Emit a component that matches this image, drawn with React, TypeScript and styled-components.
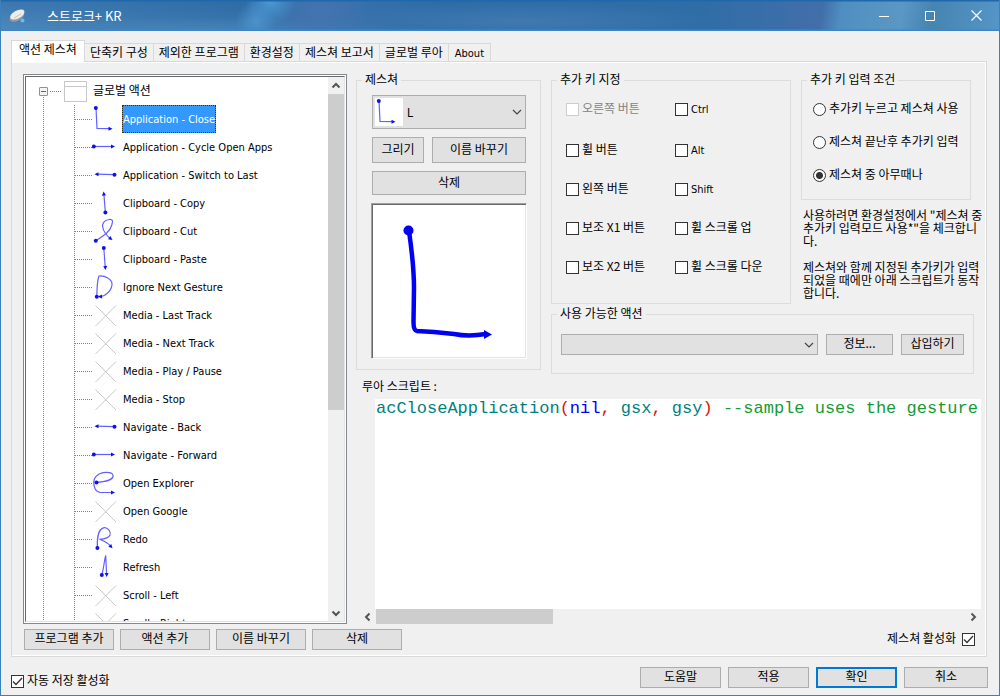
import React, { useState } from "react";
import styled, { createGlobalStyle, css } from "styled-components";

const korean = `"Noto Sans CJK KR", sans-serif`;
const latin = `"DejaVu Sans Condensed", "DejaVu Sans", "Noto Sans CJK KR", sans-serif`;

const GlobalStyle = createGlobalStyle`
  * { box-sizing: border-box; }
  body { margin: 0; overflow: hidden; background: #f0f0f0; }
  button, select, input { font: inherit; color: inherit; }
`;

const Window = styled.div`
  display: flex;
  flex-direction: column;
  height: 100vh;
  min-height: 600px;
  border: 1px solid #3b82bd;
  border-top: 0;
  background: #f0f0f0;
  color: #000;
  font: 12px/14px ${korean};
`;

const TitleBar = styled.header`
  flex: none;
  display: flex;
  align-items: center;
  height: 31px;
  padding-left: 6px;
  color: #fff;
  background:
    linear-gradient(#1e68ab 0 1px, transparent 2px 29px, #3f86c6 30px),
    radial-gradient(ellipse 26px 26px at 27% 0, #4c9ad6, transparent),
    radial-gradient(ellipse 20px 20px at 25.5% 70%, #4c92cc, transparent),
    radial-gradient(ellipse 50px 34px at 32% 40%, #4374b0, transparent),
    radial-gradient(ellipse 200px 14px at 20% 100%, #4683b8, transparent),
    radial-gradient(ellipse 200px 20px at 52% 70%, #4179b0, transparent),
    linear-gradient(8deg, #4e89bc 0, #3d79b0 16%, transparent 36%),
    linear-gradient(100deg, transparent 82%, #4f8fc0 84%, #5b97c4 90%, #4684b2 93%, #5596c6 100%),
    linear-gradient(90deg, #2f6ea8, #2f6ca6 25%, #3a72ac 32%, #2d6ca6 45%, #2f6da7 70%, #416fa9 82%);
`;

const Title = styled.h1`
  flex: 1;
  margin: 0 0 0 20px;
  font-size: 13px;
  font-weight: 400;
  line-height: 15px;
`;

const CaptionButton = styled.button`
  display: grid;
  place-items: center;
  width: 46px;
  height: 30px;
  padding: 0;
  border: 0;
  background: none;
`;

const Tabs = styled.nav`
  flex: none;
  display: flex;
  align-items: flex-end;
  height: 31px;
  margin: 0 13px -1px 10px;
  z-index: 1;
`;

const Tab = styled.button<{ $active?: boolean; $latin?: boolean }>`
  height: 19px;
  margin: 0;
  padding: 0 5px 1px;
  border: 1px solid #d9d9d9;
  border-left: 0;
  background: #f0f0f0;
  white-space: nowrap;
  ${(p) => p.$latin && css`padding: 2px 6px 0; font-family: ${latin}; font-size: 11px;`}
  ${(p) =>
    p.$active &&
    css`
      height: 22px;
      padding: 0 7px 5px;
      border-left: 1px solid #d9d9d9;
      border-bottom: 0;
      background: #fff;
    `}
`;

const Panel = styled.main`
  flex: 1;
  min-height: 0;
  display: flex;
  flex-direction: column;
  margin: 0 12px 0 10px;
  border: 1px solid #d9d9d9;
  box-shadow: inset -1px -1px #fff, inset 0 1px #fff;
  padding: 12px 1px 6px 0;
`;

const Workspace = styled.div`
  flex: 1;
  min-height: 0;
  display: flex;
  gap: 9px;
  padding-left: 11px;
`;

const TreeFrame = styled.div`
  flex: none;
  width: 324px;
  border: 1px solid #828790;
  padding: 1px;
  background: #fff;
`;

const TreeInset = styled.div`
  display: flex;
  height: 100%;
  border: 1px solid #696969;
  border-right-color: #e3e3e3;
  border-bottom-color: #e3e3e3;
`;

const TreeList = styled.ul`
  flex: 1;
  min-width: 0;
  margin: 0;
  padding: 0;
  overflow: hidden;
  list-style: none;
  font-family: ${latin};
  font-size: 11px;
`;

const vDots = `repeating-linear-gradient(#808080 0 1px, transparent 1px 2px)`;
const hDots = `repeating-linear-gradient(90deg, #808080 0 1px, transparent 1px 2px)`;

const TreeRow = styled.li<{ $root?: boolean }>`
  display: flex;
  align-items: center;
  height: 28px;
  ${(p) => p.$root && css`background: ${vDots} 17px 100% / 1px 8px no-repeat;`}
`;

const Guide = styled.span<{ $width: number }>`
  flex: none;
  width: ${(p) => p.$width}px;
  height: 28px;
  background: ${vDots} right / 1px 100% no-repeat;
`;

const Branch = styled.span<{ $width: number }>`
  flex: none;
  width: ${(p) => p.$width}px;
  height: 1px;
  background: ${hDots};
`;

const Toggle = styled.button`
  flex: none;
  width: 9px;
  height: 9px;
  margin: 0 2px 0 13px;
  padding: 0;
  border: 1px solid #919191;
  border-radius: 1px;
  background: linear-gradient(#4b63a7, #4b63a7) center / 5px 1px no-repeat, #f4f4f4;
`;

const FolderIcon = styled.span`
  flex: none;
  width: 23px;
  height: 21px;
  margin: 0 6px 0 3px;
  border: 1px solid #c8c8c8;
  background: linear-gradient(#c8c8c8, #c8c8c8) 0 4px / 100% 1px no-repeat;
`;

const RootLabel = styled.span`
  font: 12px/14px ${korean};
  padding-bottom: 3px;
`;

const Item = styled.button<{ $selected: boolean }>`
  height: 28px;
  margin-left: 2px;
  padding: 2px 0 0;
  border: 1px dotted ${(p) => (p.$selected ? "#3a2a10" : "transparent")};
  background: ${(p) => (p.$selected ? "#3399ff" : "none")};
  color: ${(p) => (p.$selected ? "#fff" : "#000")};
  white-space: nowrap;
`;

const VScroll = styled.div`
  flex: none;
  display: flex;
  flex-direction: column;
  align-items: center;
  width: 16px;
  background: #f0f0f0;
`;

const VThumb = styled.div`
  width: 16px;
  height: 58%;
  margin-right: 1px;
  background: #cdcdcd;
`;

const ArrowBox = styled.button`
  flex: none;
  display: grid;
  place-items: center;
  width: 17px;
  height: 17px;
  padding: 0;
  border: 0;
  background: none;
`;

const Spacer = styled.div`
  flex: 1;
`;

const Details = styled.div`
  flex: 1;
  min-width: 0;
  display: flex;
  flex-direction: column;
`;

const Groups = styled.div`
  flex: none;
  display: flex;
  gap: 10px;
  align-items: flex-start;
  margin-top: -1px;
`;

const GroupColumn = styled.div`
  flex: 1;
  min-width: 0;
`;

const GroupRow = styled.div`
  display: flex;
  gap: 10px;
  align-items: flex-start;
`;

const GroupBox = styled.fieldset`
  min-width: 0;
  margin: 0;
  padding: 0;
  border: 1px solid #dcdcdc;
`;

const Legend = styled.legend`
  height: 15px;
  margin-left: 5px;
  padding: 0 3px;
  line-height: 11px;
`;

const GestureBox = styled(GroupBox)`
  flex: none;
  width: 185px;
`;

const GestureBody = styled.div`
  display: grid;
  grid-template-columns: 52px 1fr;
  gap: 8px;
  padding: 7px 14px 10px 15px;
`;

const SelectWrap = styled.div<{ $wide?: boolean }>`
  position: relative;
  display: flex;
  flex: 1;
  min-width: 0;
  ${(p) => p.$wide && css`grid-column: 1 / -1;`}
`;

const Select = styled.select<{ $tall?: boolean }>`
  appearance: none;
  width: 100%;
  height: ${(p) => (p.$tall ? 34 : 21)}px;
  padding: 2px 24px 0 ${(p) => (p.$tall ? 34 : 6)}px;
  border: 1px solid #adadad;
  border-radius: 0;
  background: #e1e1e1;
  font-family: ${latin};
`;

const SelectChevron = styled.svg`
  position: absolute;
  right: 4px;
  top: calc(50% - 3px);
  pointer-events: none;
`;

const SelectThumb = styled.svg`
  position: absolute;
  left: 3px;
  top: 3px;
  background: #fff;
  pointer-events: none;
`;

const Button = styled.button<{ $width?: number; $height?: number; $wide?: boolean; $primary?: boolean }>`
  flex: none;
  width: ${(p) => (p.$width ? `${p.$width}px` : "auto")};
  height: ${(p) => p.$height ?? 21}px;
  padding: 0 0 3px;
  border: ${(p) => (p.$primary ? "2px solid #0078d7" : "1px solid #adadad")};
  border-radius: 0;
  background: #e1e1e1;
  line-height: 14px;
  white-space: nowrap;
  ${(p) => p.$wide && css`grid-column: 1 / -1;`}
`;

const Preview = styled.div`
  grid-column: 1 / -1;
  height: 156px;
  margin: 0 -1px;
  border: 1px solid #a0a0a0;
  border-right-color: #fff;
  border-bottom-color: #fff;
  background: #fff;
  box-shadow: inset 1px 1px #696969, inset -1px -1px #e3e3e3;
`;

const KeysBox = styled(GroupBox)`
  flex: 1 0 240px;
`;

const KeyGrid = styled.div`
  display: grid;
  grid-template-columns: 109px 1fr;
  grid-template-rows: 41px repeat(4, 39px);
  align-items: start;
  padding: 15px 0 3px 14px;
`;

const Choice = styled.label<{ $disabled?: boolean; $gap?: number }>`
  display: flex;
  align-items: center;
  gap: ${(p) => p.$gap ?? 3}px;
  height: 13px;
  color: ${(p) => (p.$disabled ? "#838383" : "#000")};
  white-space: nowrap;
`;

const ChoiceText = styled.span<{ $latin?: boolean }>`
  padding-bottom: 3px;
  ${(p) => p.$latin && css`padding-bottom: 0; font-family: ${latin}; font-size: 11px;`}
`;

const tick = `url("data:image/svg+xml,%3Csvg xmlns='http://www.w3.org/2000/svg' width='11' height='11'%3E%3Cpath d='M1 5.5L4 8.5L10 2' fill='none' stroke='%23333' stroke-width='1.3'/%3E%3C/svg%3E")`;

const CheckBox = styled.input.attrs({ type: "checkbox" })`
  appearance: none;
  flex: none;
  width: 13px;
  height: 13px;
  margin: 0;
  border: 1px solid #333;
  background: #fff;
  &:checked { background: ${tick} center no-repeat #fff; }
  &:disabled { border-color: #ccc; }
`;

const Radio = styled.input.attrs({ type: "radio" })`
  appearance: none;
  flex: none;
  width: 13px;
  height: 13px;
  margin: 0;
  border: 1px solid #333;
  border-radius: 50%;
  background: #fff;
  &:checked { background: radial-gradient(circle, #333 3px, #fff 4px); }
`;

const ConditionColumn = styled.div`
  flex: none;
  width: 184px;
`;

const ConditionBox = styled(GroupBox)`
  width: 170px;
`;

const RadioList = styled.div`
  display: grid;
  gap: 20px;
  padding: 15px 0 17px 11px;
`;

const Note = styled.p`
  margin: 8px 0 0 2px;
  line-height: 13px;
  & + & { margin-top: 13px; }
`;

const ActionBox = styled(GroupBox)`
  margin: 3px 11px 0 0;
`;

const ActionRow = styled.div`
  display: flex;
  gap: 8px;
  padding: 12px 9px 18px;
`;

const ScriptLabel = styled.div`
  flex: none;
  height: 25px;
  padding: 5px 0 0 6px;
`;

const Editor = styled.div`
  flex: 1;
  min-height: 0;
  display: flex;
  flex-direction: column;
  margin-right: 4px;
`;

const Code = styled.pre`
  flex: 1;
  min-height: 0;
  margin: 0 0 0 19px;
  padding-left: 1px;
  overflow: hidden;
  background: #fff;
  color: #008080;
  font: 17px/19px "Courier New", "Liberation Mono", monospace;
  outline: 0;
`;

const Token = styled.span<{ $kind: "punct" | "keyword" | "comment" }>`
  color: ${(p) => ({ punct: "#e01010", keyword: "#0000ff", comment: "#159a35" })[p.$kind]};
`;

const HScroll = styled.div`
  flex: none;
  display: flex;
  align-items: center;
  height: 15px;
  padding-left: 3px;
`;

const HThumb = styled.div`
  width: 177px;
  height: 15px;
  background: #cdcdcd;
`;

const Toolbar = styled.div`
  flex: none;
  display: flex;
  gap: 6px;
  align-items: center;
  margin-top: 5px;
  padding: 0 10px 0 12px;
`;

const Footer = styled.footer`
  flex: none;
  display: flex;
  gap: 7px;
  align-items: flex-end;
  height: 38px;
  padding: 0 11px 7px 10px;
`;

const BLUE = "#1010e8";

function Arrow({ x, y, angle }: { x: number; y: number; angle: number }) {
  return <path d="M0 0L-4 -2V2Z" fill={BLUE} transform={`translate(${x} ${y}) rotate(${angle})`} />;
}

const gestures: Record<string, { d: string; dot: [number, number]; tip: [number, number, number] }> = {
  l: { d: "M4 3L5 23.5L19 23.7", dot: [3.8, 3], tip: [20.5, 23.7, 0] },
  right: { d: "M2 13.5H21", dot: [1.8, 13.5], tip: [23, 13.5, 0] },
  left: { d: "M23 13.7L4 13.2", dot: [22.5, 13.7], tip: [2.5, 13.2, 180] },
  up: { d: "M13.4 23.5L11.8 4", dot: [13.4, 23.5], tip: [11.6, 2.5, -95] },
  cut: { d: "M3.8 23.8C11 19 18 15 19.8 8C21 4 21 2 17 2.5C12 3 10 7 10.7 10C11.5 15 15 19 19 22", dot: [3.8, 23.8], tip: [20.5, 23, 35] },
  down: { d: "M11.8 3L13.3 23", dot: [11.8, 3], tip: [13.5, 25, 86] },
  ignore: { d: "M4.8 23.5C5 14 5 8 7 3C13 2.5 20 6 20 11C20 17 14 23 8 23.8", dot: [4.8, 23.7], tip: [6, 23.8, 175] },
  explorer: { d: "M4.5 13.4C11 13 20 12 21 7.5C22 3 14 3 11 3.7C5 5 1.5 9 1.7 13.5C2 19 3 23 8 23.3L21 23.5", dot: [4.5, 13.4], tip: [23, 23.4, 0] },
  redo: { d: "M5.4 23C5 15 6 4 11.5 2.8C16 2 19 7 18 10C17 13 12 14 7.5 14.3C12 16 16 18 19 21.5", dot: [5.4, 23], tip: [20.5, 23.3, 48] },
  refresh: { d: "M9.8 22C12 15 12 8 13.7 2.5L14.6 21", dot: [9.8, 22], tip: [14.7, 24, 88] },
};

function GestureShape({ kind }: { kind: string }) {
  const g = gestures[kind];
  if (!g) return <path d="M3.5 4.5L24 25M24 4.5L3.5 25" stroke="#c8c8c8" fill="none" />;
  return (
    <>
      <path d={g.d} stroke="#6060ff" strokeWidth="1.2" fill="none" />
      <circle cx={g.dot[0]} cy={g.dot[1]} r="2" fill={BLUE} />
      <Arrow x={g.tip[0]} y={g.tip[1]} angle={g.tip[2]} />
    </>
  );
}

const actions: [string, string][] = [
  ["Application - Close", "l"],
  ["Application - Cycle Open Apps", "right"],
  ["Application - Switch to Last", "left"],
  ["Clipboard - Copy", "up"],
  ["Clipboard - Cut", "cut"],
  ["Clipboard - Paste", "down"],
  ["Ignore Next Gesture", "ignore"],
  ["Media - Last Track", "none"],
  ["Media - Next Track", "none"],
  ["Media - Play / Pause", "none"],
  ["Media - Stop", "none"],
  ["Navigate - Back", "left"],
  ["Navigate - Forward", "right"],
  ["Open Explorer", "explorer"],
  ["Open Google", "none"],
  ["Redo", "redo"],
  ["Refresh", "refresh"],
  ["Scroll - Left", "none"],
  ["Scroll - Right", "none"],
];

const keys: { text: string; latin?: boolean; disabled?: boolean }[] = [
  { text: "오른쪽 버튼", disabled: true },
  { text: "Ctrl", latin: true },
  { text: "휠 버튼" },
  { text: "Alt", latin: true },
  { text: "왼쪽 버튼" },
  { text: "Shift", latin: true },
  { text: "보조 X1 버튼" },
  { text: "휠 스크롤 업" },
  { text: "보조 X2 버튼" },
  { text: "휠 스크롤 다운" },
];

const conditions = ["추가키 누르고 제스쳐 사용", "제스쳐 끝난후 추가키 입력", "제스쳐 중 아무때나"];

const tabs = ["액션 제스쳐", "단축키 구성", "제외한 프로그램", "환경설정", "제스쳐 보고서", "글로벌 루아", "About"];

function ScrollArrow({ dir }: { dir: "up" | "down" | "left" | "right" }) {
  const angle = { up: 0, right: 90, down: 180, left: 270 }[dir];
  return (
    <ArrowBox type="button" aria-label={dir}>
      <svg width="10" height="10" viewBox="0 0 10 10">
        <path d="M1.5 6.5L5 3L8.5 6.5" fill="none" stroke="#555" strokeWidth="2" transform={`rotate(${angle} 5 5)`} />
      </svg>
    </ArrowBox>
  );
}

function Chevron() {
  return (
    <SelectChevron width="10" height="7" viewBox="0 0 10 7">
      <path d="M1 1L5 5L9 1" fill="none" stroke="#444" strokeWidth="1.2" />
    </SelectChevron>
  );
}

export default function App() {
  const [selected, setSelected] = useState(0);
  const [condition, setCondition] = useState(2);

  return (
    <Window>
      <GlobalStyle />
      <TitleBar>
        <svg width="20" height="20" viewBox="0 0 20 20">
          <ellipse cx="10" cy="10.5" rx="8" ry="4.2" transform="rotate(-28 10 10.5)" fill="#999" />
          <ellipse cx="10.3" cy="8.5" rx="7.8" ry="4" transform="rotate(-28 10.3 8.5)" fill="#ececec" />
          <path d="M7 12L14 8" stroke="#c4c4c4" />
          <circle cx="15.5" cy="14.5" r="2" fill="#5bc0f5" />
        </svg>
        <Title>스트로크+ KR</Title>
        <CaptionButton type="button" aria-label="최소화">
          <svg width="10" height="10"><path d="M0 5.5H10" stroke="#fff" /></svg>
        </CaptionButton>
        <CaptionButton type="button" aria-label="최대화">
          <svg width="10" height="10"><path d="M.5 .5H9.5V9.5H.5Z" stroke="#fff" fill="none" /></svg>
        </CaptionButton>
        <CaptionButton type="button" aria-label="닫기">
          <svg width="11" height="11"><path d="M.5 .5L10.5 10.5M10.5 .5L.5 10.5" stroke="#fff" strokeWidth="1.2" /></svg>
        </CaptionButton>
      </TitleBar>

      <Tabs>
        {tabs.map((t, i) => (
          <Tab key={t} type="button" $active={i === 0} $latin={t === "About"}>{t}</Tab>
        ))}
      </Tabs>

      <Panel>
        <Workspace>
          <TreeFrame>
            <TreeInset>
              <TreeList>
                <TreeRow $root>
                  <Toggle type="button" aria-label="접기" />
                  <Branch $width={11} />
                  <FolderIcon />
                  <RootLabel>글로벌 액션</RootLabel>
                </TreeRow>
                {actions.map(([name, kind], i) => (
                  <TreeRow key={name}>
                    <Guide $width={18} />
                    <Guide $width={31} />
                    <Branch $width={17} />
                    <svg width="28" height="28" viewBox="0 0 28 28"><GestureShape kind={kind} /></svg>
                    <Item type="button" $selected={i === selected} onClick={() => setSelected(i)}>{name}</Item>
                  </TreeRow>
                ))}
              </TreeList>
              <VScroll>
                <ScrollArrow dir="up" />
                <VThumb />
                <Spacer />
                <ScrollArrow dir="down" />
              </VScroll>
            </TreeInset>
          </TreeFrame>

          <Details>
            <Groups>
              <GestureBox>
                <Legend>제스쳐</Legend>
                <GestureBody>
                  <SelectWrap $wide>
                    <Select $tall aria-label="제스쳐"><option>L</option></Select>
                    <SelectThumb width="28" height="28" viewBox="0 0 28 28"><GestureShape kind="l" /></SelectThumb>
                    <Chevron />
                  </SelectWrap>
                  <Button type="button" $height={26}>그리기</Button>
                  <Button type="button" $height={26}>이름 바꾸기</Button>
                  <Button type="button" $height={24} $wide>삭제</Button>
                  <Preview>
                    <svg width="154" height="154" viewBox="0 0 154 154">
                      <path d="M37 27C40 48 42 66 42 84L41.5 118Q41.500 126.500 45 127L62 128L82 130C92 132 102 132 114 130" fill="none" stroke="#0000f5" strokeWidth="4.5" />
                      <circle cx="36.5" cy="26.5" r="5" fill="#0000f5" />
                      <path d="M120 130.5L112 126V135Z" fill="#0000f5" />
                    </svg>
                  </Preview>
                </GestureBody>
              </GestureBox>

              <GroupColumn>
                <GroupRow>
                  <KeysBox>
                    <Legend>추가 키 지정</Legend>
                    <KeyGrid>
                      {keys.map((k) => (
                        <Choice key={k.text} $disabled={k.disabled}>
                          <CheckBox disabled={k.disabled} />
                          <ChoiceText $latin={k.latin}>{k.text}</ChoiceText>
                        </Choice>
                      ))}
                    </KeyGrid>
                  </KeysBox>
                  <ConditionColumn>
                    <ConditionBox>
                      <Legend>추가 키 입력 조건</Legend>
                      <RadioList>
                        {conditions.map((c, i) => (
                          <Choice key={c}>
                            <Radio name="condition" checked={condition === i} onChange={() => setCondition(i)} />
                            <ChoiceText>{c}</ChoiceText>
                          </Choice>
                        ))}
                      </RadioList>
                    </ConditionBox>
                    <Note>사용하려면 환경설정에서 "제스쳐 중 추가키 입력모드 사용*"을 체크합니다.</Note>
                    <Note>제스쳐와 함께 지정된 추가키가 입력되었을 때에만 아래 스크립트가 동작합니다.</Note>
                  </ConditionColumn>
                </GroupRow>
                <ActionBox>
                  <Legend>사용 가능한 액션</Legend>
                  <ActionRow>
                    <SelectWrap>
                      <Select aria-label="사용 가능한 액션" />
                      <Chevron />
                    </SelectWrap>
                    <Button type="button" $width={67}>정보...</Button>
                    <Button type="button" $width={63}>삽입하기</Button>
                  </ActionRow>
                </ActionBox>
              </GroupColumn>
            </Groups>

            <ScriptLabel id="script-label">루아 스크립트 :</ScriptLabel>
            <Editor>
              <Code role="textbox" aria-labelledby="script-label" contentEditable suppressContentEditableWarning spellCheck={false}>
                acCloseApplication<Token $kind="punct">(</Token><Token $kind="keyword">nil</Token><Token $kind="punct">,</Token> gsx<Token $kind="punct">,</Token> gsy<Token $kind="punct">)</Token> <Token $kind="comment">--sample uses the gesture s</Token>
              </Code>
              <HScroll>
                <ScrollArrow dir="left" />
                <HThumb />
                <Spacer />
                <ScrollArrow dir="right" />
              </HScroll>
            </Editor>
          </Details>
        </Workspace>

        <Toolbar>
          <Button type="button" $width={90}>프로그램 추가</Button>
          <Button type="button" $width={90}>액션 추가</Button>
          <Button type="button" $width={90}>이름 바꾸기</Button>
          <Button type="button" $width={90}>삭제</Button>
          <Spacer />
          <Choice $gap={6}>
            <ChoiceText>제스쳐 활성화</ChoiceText>
            <CheckBox defaultChecked />
          </Choice>
        </Toolbar>
      </Panel>

      <Footer>
        <Choice>
          <CheckBox defaultChecked />
          <ChoiceText>자동 저장 활성화</ChoiceText>
        </Choice>
        <Spacer />
        <Button type="button" $width={81}>도움말</Button>
        <Button type="button" $width={81}>적용</Button>
        <Button type="button" $width={81} $primary>확인</Button>
        <Button type="button" $width={84}>취소</Button>
      </Footer>
    </Window>
  );
}
